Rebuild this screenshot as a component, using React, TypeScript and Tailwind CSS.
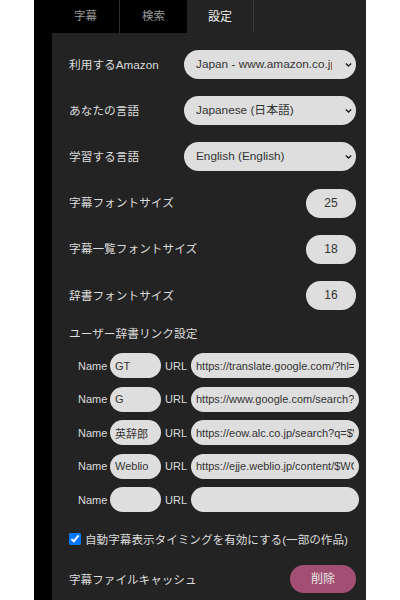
import React from "react";

function Chevron() {
  return (
    <svg
      className="absolute right-[4px] top-1/2 -translate-y-1/2 pointer-events-none"
      width="7"
      height="5"
      viewBox="0 0 7 5"
    >
      <path d="M0.8 1l2.7 2.6L6.2 1" stroke="#222" strokeWidth="1.4" fill="none" />
    </svg>
  );
}

function SelectRow({ label, value }: { label: string; value: string }) {
  return (
    <div className="flex items-center justify-between h-[29px]">
      <span className="text-[11.7px] text-[#dcdcdc]">{label}</span>
      <div className="relative w-[172px] h-[29px]">
        <select
          defaultValue={value}
          className="appearance-none w-full h-full rounded-full bg-[#dedede] text-[#333] text-[11.8px] pl-[12px] pr-[24px] outline-none font-['Liberation_Sans','Noto_Sans_CJK_JP',sans-serif]"
        >
          <option value={value}>{value}</option>
        </select>
        <Chevron />
      </div>
    </div>
  );
}

function NumberRow({ label, value }: { label: string; value: string }) {
  return (
    <div className="flex items-center justify-between h-[29px]">
      <span className="text-[11.7px] text-[#dcdcdc]">{label}</span>
      <input
        defaultValue={value}
        className="w-[50px] h-[29px] rounded-full bg-[#dedede] text-[#333] text-[12px] text-center outline-none font-['Liberation_Sans',sans-serif]"
      />
    </div>
  );
}

function LinkRow({ name, url }: { name: string; url: string }) {
  return (
    <div className="flex items-center h-[25px] ml-[9px] mr-[-3px]">
      <span className="text-[11px] text-[#dcdcdc] w-[32px]">Name</span>
      <input
        defaultValue={name}
        className="w-[51px] h-[25px] rounded-full bg-[#dedede] text-[#333] text-[11px] px-[5px] outline-none font-['Liberation_Sans','Noto_Sans_CJK_JP',sans-serif]"
      />
      <span className="text-[11px] text-[#dcdcdc] ml-[4px] w-[26px]">URL</span>
      <input
        defaultValue={url}
        className="flex-1 min-w-0 h-[25px] rounded-full bg-[#dedede] text-[#333] text-[11px] px-[5px] outline-none font-['Liberation_Sans',sans-serif]"
      />
    </div>
  );
}

export default function App() {
  return (
    <div className="flex w-[400px] h-[600px] bg-white overflow-hidden font-['Liberation_Sans','Noto_Sans_CJK_JP',sans-serif]">
      <div className="w-[34px] shrink-0 bg-white" />
      <div className="w-[18px] shrink-0 bg-black" />
      <div className="w-[314px] shrink-0 bg-[#232323] flex flex-col">
        <div className="flex h-[33px] shrink-0">
          <div className="w-[68px] bg-black border-r border-[#2e2e2e] flex items-center justify-center text-[11.5px] text-[#9a9a9a]">
            字幕
          </div>
          <div className="w-[67px] bg-black flex items-center justify-center text-[11.5px] text-[#9a9a9a]">
            検索
          </div>
          <div className="w-[67px] bg-[#232323] border-r border-[#3a3a3a] flex items-center justify-center text-[12px] text-[#eeeeee]">
            設定
          </div>
        </div>

        <div className="flex flex-col pl-[17px] pr-[10px] pt-[17px]">
          <div className="flex flex-col gap-[17.2px]">
            <SelectRow label="利用するAmazon" value="Japan - www.amazon.co.jp" />
            <SelectRow label="あなたの言語" value="Japanese (日本語)" />
            <SelectRow label="学習する言語" value="English (English)" />
            <NumberRow label="字幕フォントサイズ" value="25" />
            <NumberRow label="字幕一覧フォントサイズ" value="18" />
            <NumberRow label="辞書フォントサイズ" value="16" />
          </div>

          <div className="mt-[16.5px] h-[16px] leading-[16px] text-[11.7px] text-[#dcdcdc]">
            ユーザー辞書リンク設定
          </div>

          <div className="mt-[11px] flex flex-col gap-[8.5px]">
            <LinkRow name="GT" url="https://translate.google.com/?hl=ja&sl=auto&tl=ja&text=$WORD" />
            <LinkRow name="G" url="https://www.google.com/search?q=$WORD" />
            <LinkRow name="英辞郎" url="https://eow.alc.co.jp/search?q=$WORD" />
            <LinkRow name="Weblio" url="https://ejje.weblio.jp/content/$WORD" />
            <LinkRow name="" url="" />
          </div>

          <label className="mt-[19px] h-[16px] flex items-center text-[11.6px] text-[#dcdcdc]">
            <input type="checkbox" defaultChecked className="w-[12px] h-[12px] m-0 mr-[4px] accent-[#0075ff]" />
            自動字幕表示タイミングを有効にする(一部の作品)
          </label>

          <div className="mt-[18px] flex items-center justify-between h-[28px]">
            <span className="text-[11.6px] text-[#dcdcdc]">字幕ファイルキャッシュ</span>
            <button className="w-[66px] h-[28px] rounded-full bg-[#a34f73] text-[12px] text-[#e6e6e6]">
              削除
            </button>
          </div>
        </div>
      </div>
      <div className="flex-1 bg-white" />
    </div>
  );
}
